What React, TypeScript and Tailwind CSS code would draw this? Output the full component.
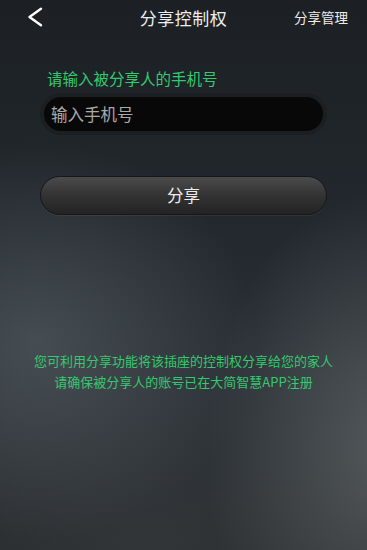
export default function App() {
  return (
    <main
      className="relative flex h-[550px] w-full flex-col overflow-hidden bg-[#1e2226] bg-[radial-gradient(ellipse_220px_200px_at_10%_62%,rgba(95,102,108,0.55),transparent),radial-gradient(ellipse_180px_260px_at_105%_82%,rgba(110,115,118,0.6),transparent),radial-gradient(ellipse_300px_200px_at_40%_100%,rgba(70,76,80,0.35),transparent),linear-gradient(180deg,#1c2024_0%,#22282d_40%,#2a3035_70%,#26292c_100%)]"
      style={{ fontFamily: '"Noto Sans CJK SC", "Noto Sans", sans-serif' }}
    >
      <header className="relative flex h-9 items-center justify-center">
        <button className="absolute left-[26px] top-[7px] text-white">
          <svg width="18" height="20" viewBox="0 0 18 20" fill="none">
            <path d="M15 1.8 3.5 10 15 18.2" stroke="currentColor" strokeWidth="2.4" strokeLinecap="round" strokeLinejoin="round" />
          </svg>
        </button>
        <h1 className="text-[17px] tracking-[0.5px] text-[#ededed]">分享控制权</h1>
        <span className="absolute right-[19px] top-[7px] text-[13.5px] text-[#ededed]">分享管理</span>
      </header>

      <section className="mt-[32px] px-[40px]">
        <p className="pl-[7px] text-[15.5px] leading-[20px] text-[#34c96f]">请输入被分享人的手机号</p>
        <div className="mt-[5px] rounded-full bg-[#1b1f22] p-[4px]">
          <div className="flex h-[34px] items-center rounded-full bg-[#080808] px-[7px] text-[16.5px] text-[#a9a9a9]">
            输入手机号
          </div>
        </div>
        <button className="mt-[41px] flex h-[39px] w-full items-center justify-center rounded-full border border-[#151718] bg-[linear-gradient(180deg,#4b4b4b_0%,#333333_50%,#232323_100%)] text-[16.5px] text-[#ececec] shadow-[0_1px_0_rgba(255,255,255,0.06)]">
          分享
        </button>
      </section>

      <section className="mt-[135px] flex flex-col items-center text-[13px] leading-[21px] text-[#34c96f]">
        <p>您可利用分享功能将该插座的控制权分享给您的家人</p>
        <p>请确保被分享人的账号已在大简智慧APP注册</p>
      </section>
    </main>
  );
}
